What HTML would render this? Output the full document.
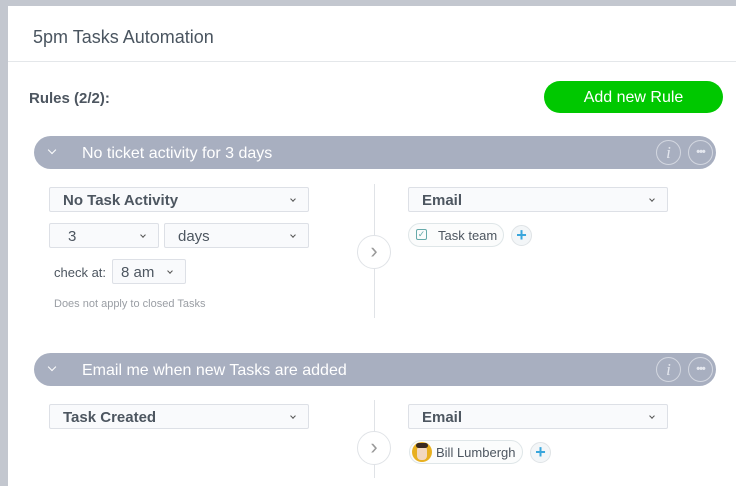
<!DOCTYPE html>
<html><head><style>
*{box-sizing:border-box;margin:0;padding:0}
body{width:736px;height:478px;overflow:hidden;background:#c3c7cf;font-family:"Liberation Sans",sans-serif;position:relative}
.a{position:absolute}
.modal{left:8px;top:6px;width:740px;height:480px;background:#fff}
.title{left:33px;top:27px;font-size:18px;color:#4a5560}
.hl{left:8px;top:61px;width:728px;height:1px;background:#e4e7ea}
.rules{left:29px;top:90px;font-size:15px;font-weight:bold;color:#4d5660}
.btn{left:544px;top:81px;width:179px;height:32px;border-radius:16px;background:#00c800;color:#fff;font-size:16px;text-align:center;line-height:33px}
.bar{left:34px;width:682px;height:33px;border-radius:17px;background:#a8afc0;color:#fff;font-size:16px;line-height:35px}
.bar .t{position:absolute;left:48px;top:0}
.bar .ch{position:absolute;left:15px;top:11px;width:6px;height:6px;border-right:1.5px solid #fff;border-bottom:1.5px solid #fff;transform:rotate(45deg)}
.ic{position:absolute;top:4px;width:25px;height:25px;border:1px solid #d3d7e0;border-radius:50%;color:#e4e7ee;text-align:center;line-height:23px;font-family:"Liberation Serif",serif;font-style:italic;font-size:17px}
.dots{font-style:normal;font-family:"Liberation Sans";font-weight:bold;font-size:11px;line-height:22px;letter-spacing:-1px}
.sel{position:absolute;height:25px;border:1px solid #dde0e6;border-radius:2px;background:#f9fafc;color:#4d5660;font-size:15px;line-height:25px;padding-left:13px}
.sel.b{font-weight:bold}
.sel:after{content:"";position:absolute;right:13px;top:9px;width:3px;height:3px;border-right:1.2px solid #555;border-bottom:1.2px solid #555;transform:rotate(45deg)}
.vl{width:1px;background:#e0e3e7}
.circ{width:34px;height:34px;border:1px solid #e0e3e7;border-radius:50%;background:#fff;color:#999;text-align:center;line-height:30px;font-size:22px}
.chip{position:absolute;height:24px;border:1px solid #dfe6e8;border-radius:12px;background:#fbfcfc;color:#4d5660;font-size:13px;line-height:23px}
.plus{position:absolute;width:21px;height:21px;border:1px solid #dfe3e6;border-radius:50%;background:#f3f6f8;color:#3aa6dc;text-align:center;line-height:18px;font-size:18px;font-weight:bold}
.small{font-size:13px;color:#4d5660}
</style></head><body>
<div class="a modal"></div>
<div class="a title">5pm Tasks Automation</div>
<div class="a hl"></div>
<div class="a rules">Rules (2/2):</div>
<div class="a btn">Add new Rule</div>

<div class="a bar" style="top:136px"><div class="ch"></div><div class="t">No ticket activity for 3 days</div><div class="ic" style="left:622px">i</div><div class="ic dots" style="left:654px">•••</div></div>
<div class="sel b" style="left:49px;top:187px;width:260px">No Task Activity</div>
<div class="sel" style="left:49px;top:223px;width:110px;padding-left:18px">3</div>
<div class="sel" style="left:164px;top:223px;width:145px">days</div>
<div class="a small" style="left:54px;top:265px">check at:</div>
<div class="sel" style="left:112px;top:259px;width:74px;padding-left:8px">8 am</div>
<div class="a" style="left:54px;top:298px;font-size:11px;color:#9a9ea4">Does not apply to closed Tasks</div>
<div class="a vl" style="left:374px;top:184px;height:134px"></div>
<div class="a circ" style="left:357px;top:235px">&#8250;</div>
<div class="sel b" style="left:408px;top:187px;width:260px">Email</div>
<div class="chip" style="left:408px;top:223px;width:96px"><span style="position:absolute;left:7px;top:5px;width:11px;height:11px;border:1px solid #6aa;border-radius:2px;font-size:9px;line-height:9px;color:#6aa;text-align:center">✓</span><span style="position:absolute;left:29px">Task team</span></div>
<div class="plus" style="left:511px;top:225px">+</div>

<div class="a bar" style="top:353px"><div class="ch"></div><div class="t">Email me when new Tasks are added</div><div class="ic" style="left:622px">i</div><div class="ic dots" style="left:654px">•••</div></div>
<div class="sel b" style="left:49px;top:404px;width:260px">Task Created</div>
<div class="a vl" style="left:374px;top:400px;height:78px"></div>
<div class="a circ" style="left:357px;top:431px">&#8250;</div>
<div class="sel b" style="left:408px;top:404px;width:260px">Email</div>
<div class="chip" style="left:409px;top:440px;width:114px"><span style="position:absolute;left:2px;top:1px;width:20px;height:20px;border-radius:50%;background:#e8b020;overflow:hidden"><span style="position:absolute;left:5px;top:4px;width:10px;height:14px;background:#f2d8c0;border-radius:4px"></span><span style="position:absolute;left:4px;top:1px;width:12px;height:5px;background:#3a2a20;border-radius:3px"></span></span><span style="position:absolute;left:26px">Bill Lumbergh</span></div>
<div class="plus" style="left:530px;top:442px">+</div>
</body></html>
